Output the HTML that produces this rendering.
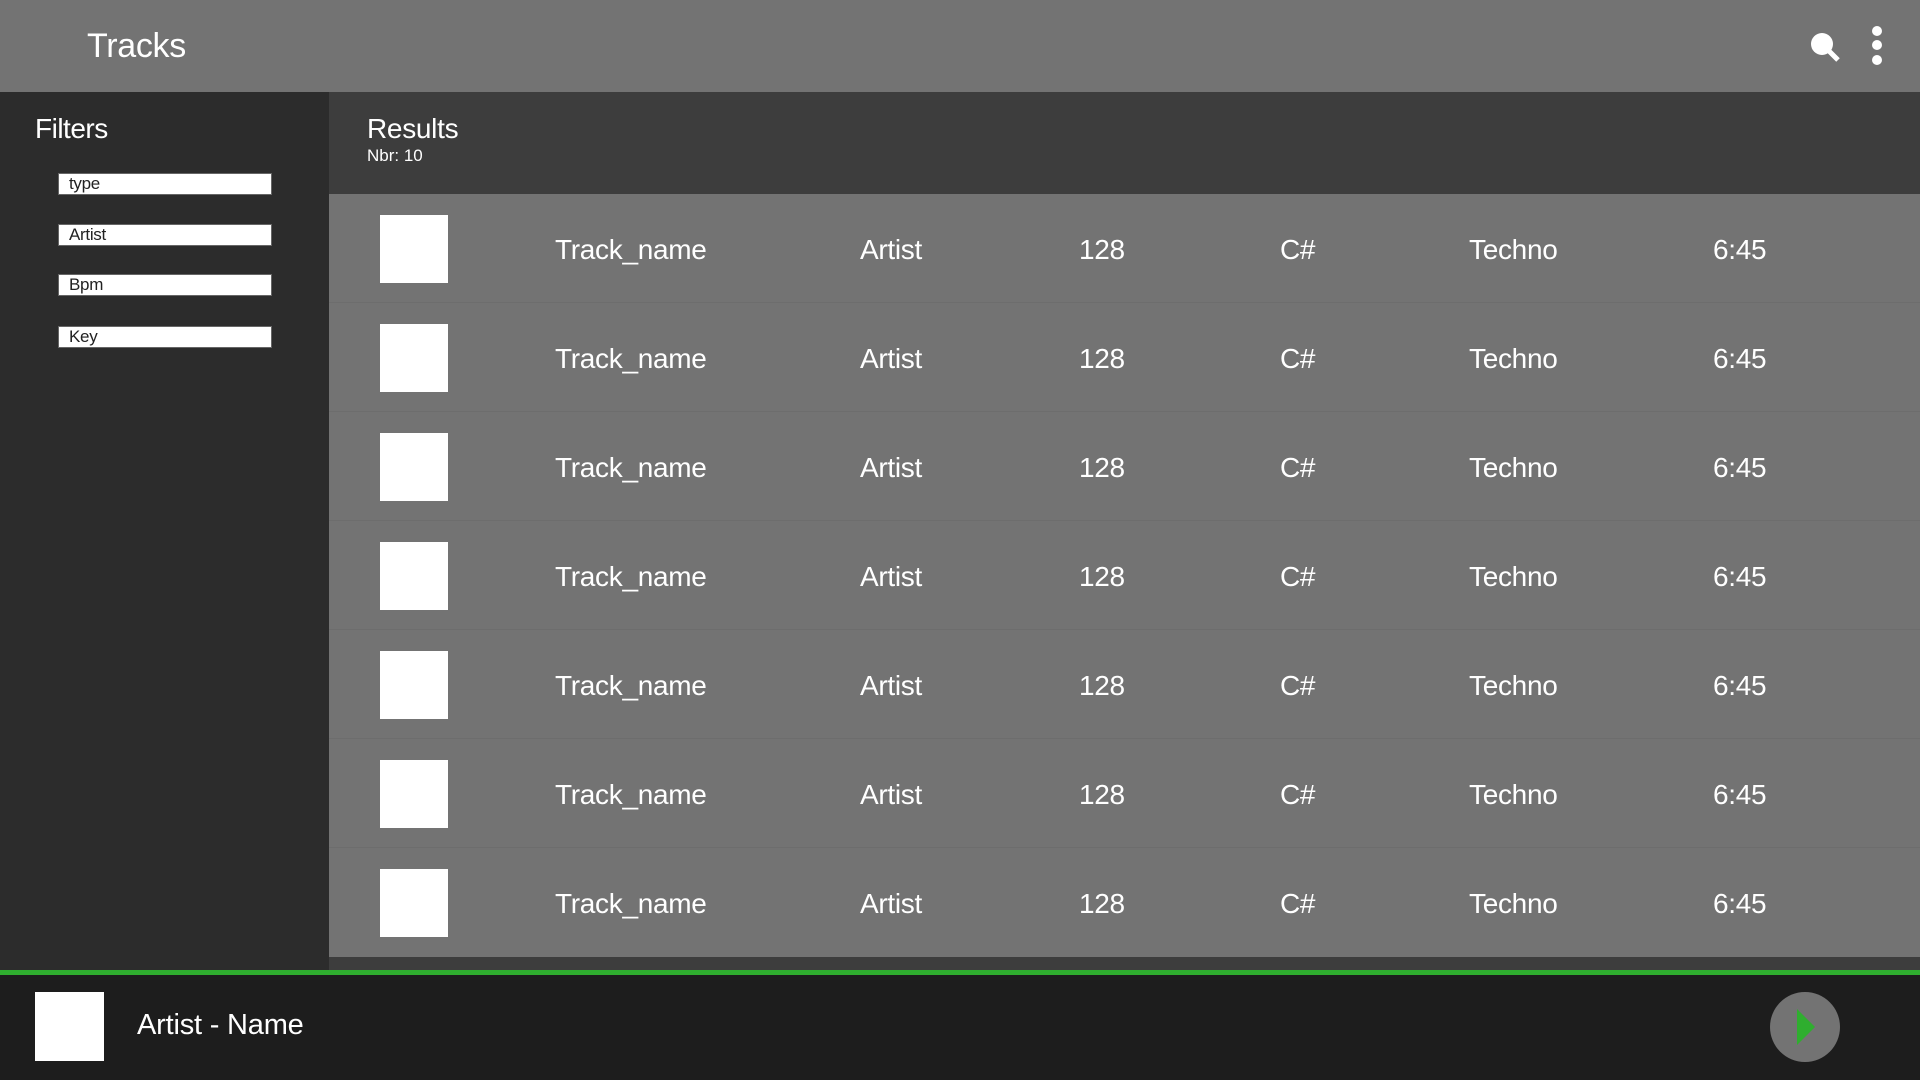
<!DOCTYPE html>
<html><head><meta charset="utf-8"><style>
*{margin:0;padding:0;box-sizing:border-box}
body{width:1920px;height:1080px;overflow:hidden;background:#2c2c2c;font-family:"Liberation Sans",Arial,sans-serif;color:#fff;position:relative}
.hdr{position:absolute;left:0;top:0;width:1920px;height:92px;background:#737373}
.hdr h1{position:absolute;left:87px;top:27px;font-size:34px;font-weight:normal;letter-spacing:-0.3px}
.side{position:absolute;left:0;top:92px;width:329px;height:879px;background:#2c2c2c}
.side h2{position:absolute;left:35px;top:21px;font-size:28px;font-weight:normal;letter-spacing:-0.5px}
.inp{position:absolute;left:58px;width:214px;height:22px;background:#fff;border:1px solid #666;color:#222;font-size:17px;padding-left:10px;line-height:19px;letter-spacing:-0.3px}
.main{position:absolute;left:329px;top:92px;width:1591px;height:879px;background:#3d3d3d}
.main h2{position:absolute;left:38px;top:21px;font-size:28px;font-weight:normal;letter-spacing:-0.3px}
.nbr{position:absolute;left:38px;top:54px;font-size:17px}
.rows{position:absolute;left:0;top:102px;width:1591px;height:763px;background:#737373}
.row{position:absolute;left:0;width:1591px;height:109px;border-bottom:1px solid #6d6d6d}
.th{position:absolute;left:51px;top:21px;width:68px;height:68px;background:#fff}
.c{position:absolute;top:40px;font-size:28px;letter-spacing:-0.3px}
.foot{position:absolute;left:0;top:970px;width:1920px;height:110px;background:#1d1d1d;border-top:5px solid #2fae2f}
.ft{position:absolute;left:35px;top:17px;width:69px;height:69px;background:#fff}
.fn{position:absolute;left:137px;top:34px;font-size:29px;letter-spacing:-0.2px}
.play{position:absolute;left:1770px;top:17px;width:70px;height:70px;border-radius:50%;background:#737373}
</style></head><body>
<div class="hdr"><h1>Tracks</h1>
<svg style="position:absolute;left:1808px;top:29px" width="34" height="34" viewBox="0 0 34 34"><circle cx="14" cy="15" r="11" fill="#fff"/><line x1="21" y1="22" x2="30" y2="31" stroke="#fff" stroke-width="5"/></svg>
<svg style="position:absolute;left:1869px;top:24px" width="16" height="44" viewBox="0 0 16 44"><circle cx="8" cy="7" r="5" fill="#fff"/><circle cx="8" cy="21" r="5" fill="#fff"/><circle cx="8" cy="36" r="5" fill="#fff"/></svg>
</div>
<div class="side"><h2>Filters</h2>
<div class="inp" style="top:81px">type</div>
<div class="inp" style="top:132px">Artist</div>
<div class="inp" style="top:182px">Bpm</div>
<div class="inp" style="top:234px">Key</div>
</div>
<div class="main"><h2>Results</h2><div class="nbr">Nbr: 10</div>
<div class="rows">
<div class="row" style="top:0"><div class="th"></div><span class="c" style="left:226px">Track_name</span><span class="c" style="left:531px">Artist</span><span class="c" style="left:750px">128</span><span class="c" style="left:951px">C#</span><span class="c" style="left:1140px">Techno</span><span class="c" style="left:1384px">6:45</span></div>
<div class="row" style="top:109px"><div class="th"></div><span class="c" style="left:226px">Track_name</span><span class="c" style="left:531px">Artist</span><span class="c" style="left:750px">128</span><span class="c" style="left:951px">C#</span><span class="c" style="left:1140px">Techno</span><span class="c" style="left:1384px">6:45</span></div>
<div class="row" style="top:218px"><div class="th"></div><span class="c" style="left:226px">Track_name</span><span class="c" style="left:531px">Artist</span><span class="c" style="left:750px">128</span><span class="c" style="left:951px">C#</span><span class="c" style="left:1140px">Techno</span><span class="c" style="left:1384px">6:45</span></div>
<div class="row" style="top:327px"><div class="th"></div><span class="c" style="left:226px">Track_name</span><span class="c" style="left:531px">Artist</span><span class="c" style="left:750px">128</span><span class="c" style="left:951px">C#</span><span class="c" style="left:1140px">Techno</span><span class="c" style="left:1384px">6:45</span></div>
<div class="row" style="top:436px"><div class="th"></div><span class="c" style="left:226px">Track_name</span><span class="c" style="left:531px">Artist</span><span class="c" style="left:750px">128</span><span class="c" style="left:951px">C#</span><span class="c" style="left:1140px">Techno</span><span class="c" style="left:1384px">6:45</span></div>
<div class="row" style="top:545px"><div class="th"></div><span class="c" style="left:226px">Track_name</span><span class="c" style="left:531px">Artist</span><span class="c" style="left:750px">128</span><span class="c" style="left:951px">C#</span><span class="c" style="left:1140px">Techno</span><span class="c" style="left:1384px">6:45</span></div>
<div class="row" style="top:654px;border-bottom:none"><div class="th"></div><span class="c" style="left:226px">Track_name</span><span class="c" style="left:531px">Artist</span><span class="c" style="left:750px">128</span><span class="c" style="left:951px">C#</span><span class="c" style="left:1140px">Techno</span><span class="c" style="left:1384px">6:45</span></div>
</div></div>
<div class="foot"><div class="ft"></div><div class="fn">Artist - Name</div>
<div class="play"><svg width="70" height="70" viewBox="0 0 70 70"><polygon points="27,17 27,53 45,35" fill="#2fae2f"/></svg></div>
</div>
</body></html>
